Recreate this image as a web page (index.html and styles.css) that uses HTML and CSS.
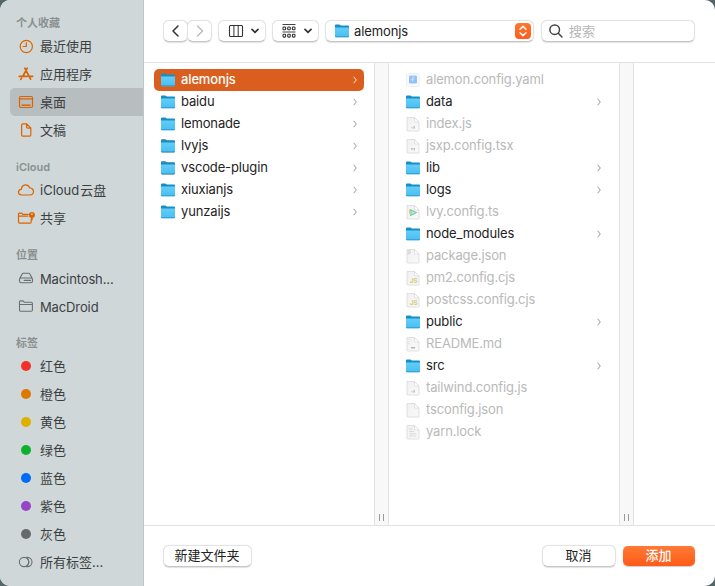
FILE: index.html
```html
<!DOCTYPE html>
<html lang="zh-CN">
<head>
<meta charset="utf-8">
<title>打开</title>
<link rel="stylesheet" href="styles.css">
</head>
<body>
<svg class="defs" aria-hidden="true">
  <defs>
    <linearGradient id="fg" x1="0" y1="0" x2="0" y2="1"><stop offset="0" stop-color="#63cdf9"/><stop offset="1" stop-color="#4abdf0"/></linearGradient>
    <linearGradient id="dg" x1="0" y1="0" x2="1" y2="1"><stop offset="0" stop-color="#f0f0f0"/><stop offset="1" stop-color="#fafafa"/></linearGradient>
    <symbol id="folder" viewBox="0 0 16 16">
      <path d="M1 2.6Q1 1.6 2 1.6H5.2Q5.8 1.6 6.3 2.1L6.8 2.6H14Q15 2.6 15 3.6V6H1Z" fill="#168fc5"/>
      <path d="M1 4.6H15V13.3Q15 14.3 14 14.3H2Q1 14.3 1 13.3Z" fill="url(#fg)"/>
      <path d="M1 13H15V13.3Q15 14.3 14 14.3H2Q1 14.3 1 13.3Z" fill="#35a5da"/>
    </symbol>
    <symbol id="doc" viewBox="0 0 16 16">
      <path d="M2 1.5H9.5L14 6V14.5Q14 15 13.5 15H2.5Q2 15 2 14.5Z" fill="url(#dg)" stroke="#d9d9d9" stroke-width=".8"/>
      <path d="M9.5 1.5V5.2Q9.5 6 10.3 6H14Z" fill="#fff" stroke="#d5d5d5" stroke-width=".7"/>
    </symbol>
    <symbol id="chev" viewBox="0 0 6 8"><path d="M1.7 .8L4.3 4L1.7 7.2" fill="none" stroke="currentColor" stroke-width="1"/></symbol>
    <symbol id="down" viewBox="0 0 8 6"><path d="M1 1.4L4 4.3L7 1.4" fill="none" stroke="#333" stroke-width="1.7" stroke-linecap="round" stroke-linejoin="round"/></symbol>
  </defs>
</svg>
<div class="dialog">
  <aside class="sidebar">
    <h2>个人收藏</h2>
    <div class="item fav"><svg viewBox="0 0 16 16"><circle cx="8.3" cy="8.5" r="6.1"/><path d="M8.3 4.7V8.5H5.1"/></svg>最近使用</div>
    <div class="item fav"><svg viewBox="0 0 16 16"><path d="M6.8 2.2L12.6 13.2M9.2 2.2L5 10M1.2 10.3H9.4M11.8 10.3H14.6M3.5 12.2L2.8 13.4" stroke-width="1.7"/></svg>应用程序</div>
    <div class="item fav selected"><svg viewBox="0 0 16 16"><rect x="1.5" y="2.5" width="13" height="11" rx="1.2"/><path d="M1.5 4.8H14.5"/><path d="M4 11.3H12" stroke-width="1.6"/></svg>桌面</div>
    <div class="item fav"><svg viewBox="0 0 16 16"><path d="M4.8 1.8H8.7L12.8 6V13Q12.8 14.2 11.6 14.2H4.8Q3.6 14.2 3.6 13V3Q3.6 1.8 4.8 1.8ZM8.6 2V5Q8.6 6.2 9.8 6.2H12.6"/></svg>文稿</div>
    <h2 class="latin">iCloud</h2>
    <div class="item fav"><svg class="wide" viewBox="0 0 18 16"><path d="M4.5 13Q1.3 12.6 1.5 9.8Q1.9 7.4 4.3 7.3Q4.7 3.3 8.4 2.8Q11.5 2.7 12.7 5.8Q16.3 6.2 16.5 9.5Q16.2 12.9 13 13Z"/></svg><span>iCloud<span class="cjk">云盘</span></span></div>
    <div class="item fav"><svg class="wide" viewBox="0 0 18 16"><path d="M11.2 4.4H5.8L4.8 3.1H2.6Q1.5 3.1 1.5 4.2V11.9Q1.5 13.1 2.7 13.1H13Q14.2 13.1 14.2 11.9V9.2M1.5 6.2H10.8"/><circle cx="14.9" cy="5" r="3" class="solid"/><path d="M14.9 7V9.8" stroke-width="1.6"/><circle cx="14.9" cy="4.1" r=".9" class="hole"/></svg>共享</div>
    <h2>位置</h2>
    <div class="item dev"><svg viewBox="0 0 16 16"><path d="M1.7 8.6L4 4.2Q4.5 3.2 5.6 3.2H10.4Q11.5 3.2 12 4.2L14.3 8.6M3.2 8H12.8Q14.5 8 14.5 9.8V11Q14.5 12.8 12.8 12.8H3.2Q1.5 12.8 1.5 11V9.8Q1.5 8 3.2 8ZM6.2 10.4H12.5" /></svg><span class="tight">Macintosh...</span></div>
    <div class="item dev"><svg viewBox="0 0 16 16"><path d="M1.5 12V4Q1.5 2.9 2.6 2.9H5L6.2 4.2H13.2Q14.4 4.2 14.4 5.4V12Q14.4 13.2 13.2 13.2H2.7Q1.5 13.2 1.5 12ZM1.5 6.5H14.4"/></svg><span class="tight">MacDroid</span></div>
    <h2>标签</h2>
    <div class="item"><i class="dot red"></i>红色</div>
    <div class="item"><i class="dot orange"></i>橙色</div>
    <div class="item"><i class="dot yellow"></i>黄色</div>
    <div class="item"><i class="dot green"></i>绿色</div>
    <div class="item"><i class="dot blue"></i>蓝色</div>
    <div class="item"><i class="dot purple"></i>紫色</div>
    <div class="item"><i class="dot gray"></i>灰色</div>
    <div class="item dev"><svg viewBox="0 0 16 16"><circle cx="6" cy="8" r="4.6"/><path d="M8.4 3.4H9.4A4.6 4.6 0 0 1 9.4 12.6H8.4M9.2 4.4A4.6 4.6 0 0 1 9.2 11.6"/></svg>所有标签...</div>
  </aside>
  <main class="main">
    <header class="toolbar">
      <div class="nav">
        <button class="ctl"><svg width="10" height="14" viewBox="0 0 10 14"><path d="M7 2L2 7L7 12" fill="none" stroke="#333" stroke-width="1.5" stroke-linecap="round" stroke-linejoin="round"/></svg></button>
        <button class="ctl"><svg width="10" height="14" viewBox="0 0 10 14"><path d="M2.5 2L7.5 7L2.5 12" fill="none" stroke="#bbb" stroke-width="1.4" stroke-linecap="round" stroke-linejoin="round"/></svg></button>
      </div>
      <button class="ctl view columns-view"><svg width="16" height="14" viewBox="0 0 16 14"><rect x="1.5" y="1.5" width="13" height="11" rx="1" fill="none" stroke="#333" stroke-width="1.1"/><path d="M5.9 1.5V12.5M10.2 1.5V12.5" stroke="#333"/></svg><svg width="8" height="6"><use href="#down"/></svg></button>
      <button class="ctl view group-view"><svg width="14" height="16" viewBox="0 0 14 16"><path d="M.5 1.5H13.5M.5 9H13.5" stroke="#444"/><g fill="none" stroke="#333" stroke-width="1.1"><rect x="1" y="4" width="2.6" height="2.8" rx=".8"/><rect x="5.7" y="4" width="2.6" height="2.8" rx=".8"/><rect x="10.4" y="4" width="2.6" height="2.8" rx=".8"/><rect x="1" y="11.3" width="2.6" height="2.8" rx=".8"/><rect x="5.7" y="11.3" width="2.6" height="2.8" rx=".8"/><rect x="10.4" y="11.3" width="2.6" height="2.8" rx=".8"/></g></svg><svg width="8" height="6"><use href="#down"/></svg></button>
      <div class="ctl path"><svg width="16" height="16"><use href="#folder"/></svg><span>alemonjs</span><b class="stepper"><svg width="10" height="12" viewBox="0 0 10 12" fill="none" stroke="#fff" stroke-width="1.5" stroke-linecap="round" stroke-linejoin="round"><path d="M2 4.2L5 1.4L8 4.2M2 7.8L5 10.6L8 7.8"/></svg></b></div>
      <div class="ctl search"><svg width="16" height="16" viewBox="0 0 16 16" fill="none" stroke="#444" stroke-width="1.5" stroke-linecap="round"><circle cx="6.7" cy="6.7" r="4.8"/><path d="M10.3 10.3L14 14"/></svg>搜索</div>
    </header>
    <section class="browser">
      <div class="list first">
        <div class="row active"><svg class="ic"><use href="#folder"/></svg><span>alemonjs</span><svg class="ch"><use href="#chev"/></svg></div>
        <div class="row"><svg class="ic"><use href="#folder"/></svg><span>baidu</span><svg class="ch"><use href="#chev"/></svg></div>
        <div class="row"><svg class="ic"><use href="#folder"/></svg><span>lemonade</span><svg class="ch"><use href="#chev"/></svg></div>
        <div class="row"><svg class="ic edged"><use href="#folder"/></svg><span>lvyjs</span><svg class="ch"><use href="#chev"/></svg></div>
        <div class="row"><svg class="ic edged"><use href="#folder"/></svg><span>vscode-plugin</span><svg class="ch"><use href="#chev"/></svg></div>
        <div class="row"><svg class="ic"><use href="#folder"/></svg><span>xiuxianjs</span><svg class="ch"><use href="#chev"/></svg></div>
        <div class="row"><svg class="ic"><use href="#folder"/></svg><span>yunzaijs</span><svg class="ch"><use href="#chev"/></svg></div>
      </div>
      <div class="gutter"><i></i></div>
      <div class="list second">
        <div class="row file"><svg class="ic" viewBox="0 0 16 16"><rect x="1.6" y="1.5" width="12.6" height="13" rx="2" fill="#fafafa" stroke="#eee"/><rect x="4" y="3.5" width="8" height="8" rx="1" fill="#8fc3fa"/><path d="M9.6 5H7.7V9.7M6.2 7.4H9.3" stroke="#c9e2fd" fill="none"/></svg><span>alemon.config.yaml</span></div>
        <div class="row"><svg class="ic"><use href="#folder"/></svg><span>data</span><svg class="ch"><use href="#chev"/></svg></div>
        <div class="row file"><svg class="ic" viewBox="0 0 16 16"><use href="#doc"/><path d="M6.5 11.8H7.6M8.5 10.8H10M8.5 12H10" stroke="#aaa"/></svg><span>index.js</span></div>
        <div class="row file"><svg class="ic" viewBox="0 0 16 16"><use href="#doc"/><path d="M6.2 10.6H7.7M8.7 10.6H10M6.6 11.6H7.3M8.7 11.8H10" stroke="#aaa"/></svg><span>jsxp.config.tsx</span></div>
        <div class="row"><svg class="ic"><use href="#folder"/></svg><span>lib</span><svg class="ch"><use href="#chev"/></svg></div>
        <div class="row"><svg class="ic"><use href="#folder"/></svg><span>logs</span><svg class="ch"><use href="#chev"/></svg></div>
        <div class="row file"><svg class="ic" viewBox="0 0 16 16"><use href="#doc"/><path d="M5 5.6V11.4L8 8.5Z" fill="#a4dfa9"/><path d="M5 5.6L11 8.5L5 11.6" fill="none" stroke="#71cf9b" stroke-width="1.3"/><path d="M4.6 5.6V10" stroke="#efc274"/><path d="M8 10.1L11.3 8.5" stroke="#78c8e8"/></svg><span>lvy.config.ts</span></div>
        <div class="row"><svg class="ic"><use href="#folder"/></svg><span>node_modules</span><svg class="ch"><use href="#chev"/></svg></div>
        <div class="row file"><svg class="ic" viewBox="0 0 16 16"><use href="#doc"/><path d="M2.4 2H6V5.5L2.4 7Z" fill="#ddd"/></svg><span>package.json</span></div>
        <div class="row file"><svg class="ic" viewBox="0 0 16 16"><use href="#doc"/><text x="4.8" y="13" class="js">JS</text></svg><span>pm2.config.cjs</span></div>
        <div class="row file"><svg class="ic" viewBox="0 0 16 16"><use href="#doc"/><text x="4.8" y="13" class="js">JS</text></svg><span>postcss.config.cjs</span></div>
        <div class="row"><svg class="ic"><use href="#folder"/></svg><span>public</span><svg class="ch"><use href="#chev"/></svg></div>
        <div class="row file"><svg class="ic" viewBox="0 0 16 16"><use href="#doc"/><path d="M4 3V8" stroke="#ddd" stroke-dasharray="1 1"/><path d="M6 11.8H10.2" stroke="#aaa" stroke-width="1.3"/></svg><span>README.md</span></div>
        <div class="row"><svg class="ic"><use href="#folder"/></svg><span>src</span><svg class="ch"><use href="#chev"/></svg></div>
        <div class="row file"><svg class="ic" viewBox="0 0 16 16"><use href="#doc"/><path d="M6.5 11.8H7.6M8.5 10.8H10M8.5 12H10" stroke="#aaa"/></svg><span>tailwind.config.js</span></div>
        <div class="row file"><svg class="ic" viewBox="0 0 16 16"><use href="#doc"/></svg><span>tsconfig.json</span></div>
        <div class="row file"><svg class="ic" viewBox="0 0 16 16"><use href="#doc"/><path d="M4.3 5H7.5M4.3 7.5H9M4.3 9.8H11.5M4.3 12H11.5" stroke="#d5d5d5" stroke-width=".9"/></svg><span>yarn.lock</span></div>
      </div>
      <div class="gutter"><i></i></div>
      <div class="list rest"></div>
    </section>
    <footer class="footer">
      <button class="ctl new">新建文件夹</button>
      <button class="ctl cancel">取消</button>
      <button class="add">添加</button>
    </footer>
  </main>
</div>
</body>
</html>
```
FILE: styles.css
```css
* { box-sizing: border-box; }
html { background: #53666a; }
body {
  margin: 0;
  font: 13px/16px Inter, "Noto Sans CJK SC", sans-serif;
  color: #222;
}
.defs { position: absolute; width: 0; height: 0; }
svg { flex: none; display: block; }
.dialog {
  display: flex;
  width: 715px;
  height: 586px;
  border-radius: 10px;
  overflow: hidden;
  background: #fff;
}
.sidebar {
  width: 144px;
  flex: none;
  background: #d0d7d9;
  border-right: 1px solid #bdc6c8;
}
.sidebar h2 {
  margin: 0;
  height: 32px;
  padding: 14px 0 0 16px;
  font-size: 11px;
  line-height: 18px;
  font-weight: 700;
  color: #89908f;
}
.sidebar h2.latin { padding-top: 15px; line-height: 17px; font-weight: 600; }
.item {
  display: flex;
  align-items: center;
  height: 28px;
  margin-left: 10px;
  padding-left: 8px;
  color: #3b4041;
  white-space: nowrap;
}
.item > svg {
  width: 16px;
  height: 16px;
  margin-right: 6px;
  fill: none;
  stroke: #69706f;
  stroke-width: 1.1;
  stroke-linecap: round;
  stroke-linejoin: round;
}
.item > svg.wide { width: 18px; margin: 0 5px 0 -1px; }
.item.fav > svg { stroke: #da6500; stroke-width: 1.2; }
.item .solid { fill: #da6500; stroke: none; }
.item .hole { fill: #d0d7d9; stroke: none; }
.item .cjk { margin-left: 1px; }
.tight { letter-spacing: -.12px; padding-top: 1px; }
.selected { background: #b8bdbf; border-radius: 5px 0 0 5px; }
.dot { width: 10px; height: 10px; border-radius: 50%; margin: 0 9px 0 3px; }
.red { background: #f23229; }
.orange { background: #df7800; }
.yellow { background: #e0b000; }
.green { background: #0cb12b; }
.blue { background: #006cf5; }
.purple { background: #9645c6; }
.gray { background: #666a6c; }

.main { flex: 1; min-width: 0; display: flex; flex-direction: column; }
.toolbar {
  display: flex;
  align-items: center;
  height: 63px;
  padding: 0 20px 1px 19px;
  border-bottom: 1px solid #e2e2e2;
}
.ctl {
  display: flex;
  align-items: center;
  justify-content: center;
  height: 22px;
  padding: 0;
  border: 1px solid #e3e3e3;
  border-bottom-color: #c6c6c6;
  border-radius: 6px;
  background: #fff;
  box-shadow: 0 .5px 1px rgba(0, 0, 0, .12);
  font: inherit;
  color: #222;
}
.nav { display: flex; }
.nav .ctl { width: 25px; }
.nav .ctl:first-child { margin-right: -1px; }
.view { width: 48px; gap: 7px; margin-left: 6px; padding-left: 2px; }
.group-view { width: 47px; gap: 8px; }
.path { width: 209px; margin-left: 6px; padding: 0 2px 0 8px; justify-content: flex-start; }
.path span { margin-left: 4px; letter-spacing: -.1px; }
.stepper {
  display: flex;
  align-items: center;
  justify-content: center;
  width: 16px;
  height: 16px;
  margin-left: auto;
  border-radius: 4px;
  background: linear-gradient(#ff7730, #ff5c1b);
}
.search { width: 154px; margin-left: 7px; padding-left: 6px; gap: 5px; justify-content: flex-start; color: #b5b5b5; }

.browser { display: flex; height: 462px; }
.list { padding: 6px 10px; }
.first { width: 230px; }
.second { width: 230px; }
.rest { flex: 1; }
.gutter {
  display: flex;
  align-items: flex-end;
  justify-content: center;
  width: 15px;
  padding-bottom: 4px;
  border: solid #e2e2e2;
  border-width: 0 1px;
  background: #f8f8f8;
}
.gutter i { width: 5px; height: 7px; border: solid #999; border-width: 0 1px; }
.row {
  display: flex;
  align-items: center;
  height: 22px;
  padding: 0 6px;
  border-radius: 5px;
  white-space: nowrap;
}
.row span { margin: 0 0 2px 5px; letter-spacing: -.14px; }
.row .ic { width: 16px; height: 16px; margin-bottom: 1px; }
.row .ch { width: 6px; height: 8px; margin-left: auto; color: #999; }
.second .ch { margin-right: 1px; }
.edged { filter: drop-shadow(0 0 .6px #555); }
.active { background: #da5f1f; color: #fff; font-weight: 500; }
.active .ch { color: #ffe3d3; }
.file { color: #b9b9b9; }
.js { font: 700 6.5px Inter, sans-serif; fill: #d2cd76; }

.footer {
  display: flex;
  align-items: center;
  height: 61px;
  padding: 0 20px 0 19px;
  border-top: 1px solid #e2e2e2;
}
.new { width: 89px; padding: 0 1px 2px 0; }
.cancel { width: 74px; margin-left: auto; padding: 0 1px 2px 0; }
.add {
  width: 72px;
  height: 20px;
  margin-left: 7px;
  padding: 0 1px 2px 0;
  border: 0;
  border-radius: 5px;
  background: linear-gradient(#ff7a35, #ff5a18);
  box-shadow: 0 .5px 1px rgba(0, 0, 0, .2);
  color: #fff;
  font: inherit;
  font-weight: 500;
}
```
